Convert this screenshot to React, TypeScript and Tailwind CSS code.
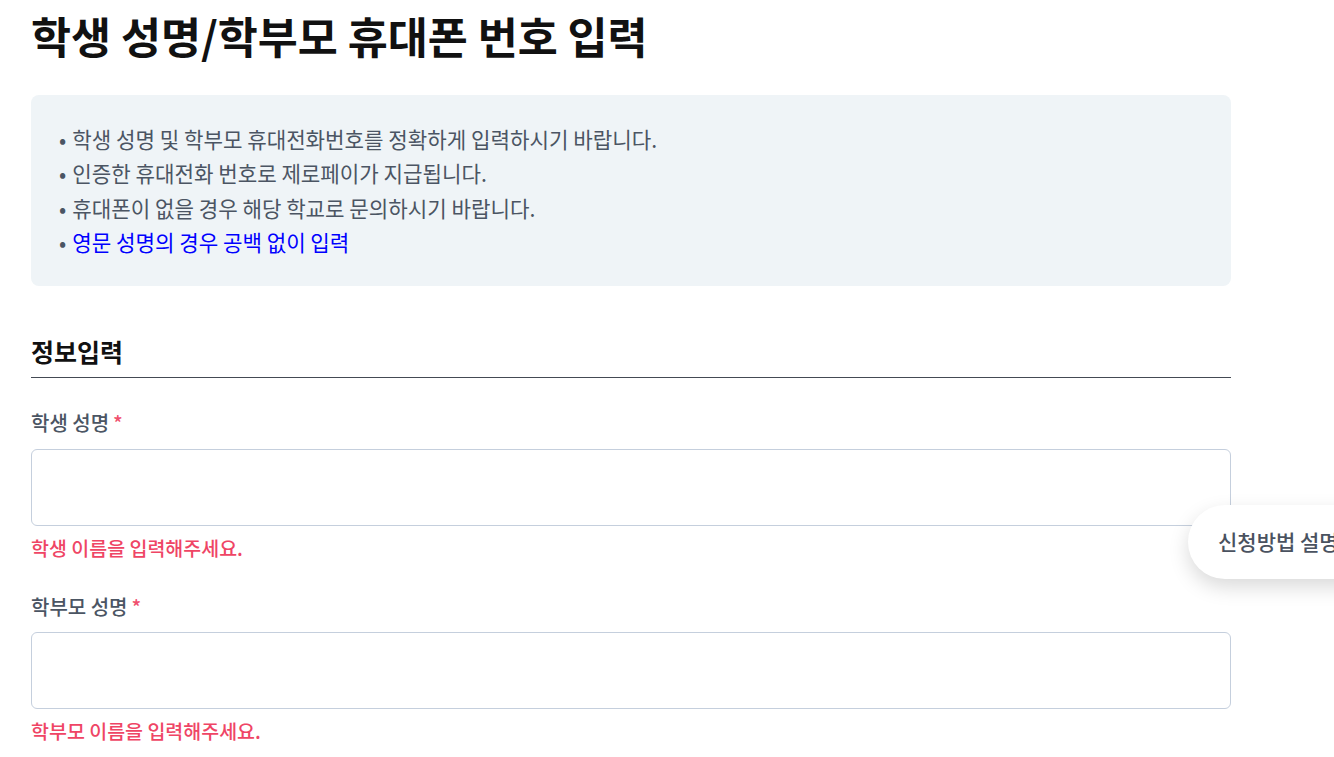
export default function App() {
  const font = 'font-["Noto_Sans_CJK_KR","Noto_Sans",sans-serif]'
  return (
    <div className={`relative min-h-[757px] w-[1334px] overflow-hidden bg-white ${font}`}>
      <div className="w-[1200px] ml-[31px]">
        <h1 className="text-[43.5px] font-semibold leading-none text-[#111] pt-[14px]">
          학생 성명/학부모 휴대폰 번호 입력
        </h1>

        <div className="mt-[37px] rounded-lg bg-[#eff4f7] px-[28px] pt-[27px] pb-[26px]">
          <ul className="text-[21.2px] leading-[34.5px] text-[#4b5563]">
            <li><span className="mr-[6px]">•</span>학생 성명 및 학부모 휴대전화번호를 정확하게 입력하시기 바랍니다.</li>
            <li><span className="mr-[6px]">•</span>인증한 휴대전화 번호로 제로페이가 지급됩니다.</li>
            <li><span className="mr-[6px]">•</span>휴대폰이 없을 경우 해당 학교로 문의하시기 바랍니다.</li>
            <li>
              <span className="mr-[6px]">•</span><span className="text-[#0000ff]">영문 성명의 경우 공백 없이 입력</span>
            </li>
          </ul>
        </div>

        <h2 className="mt-[48px] pb-[9px] border-b border-[#444a54] text-[25px] font-bold text-[#111] leading-[34px]">
          정보입력
        </h2>

        <div className="mt-[31px]">
          <label className="block text-[20px] font-medium text-[#4b5563] leading-[28px]">
            학생 성명<span className="text-[#f0506e] ml-[4px]">*</span>
          </label>
          <input className="mt-[12px] block w-full h-[77px] rounded-md border border-[#c5cfdd] px-4 text-[18px] outline-none" />
          <p className="mt-[8px] text-[19.5px] font-medium text-[#ef4565] leading-[28px]">학생 이름을 입력해주세요.</p>
        </div>

        <div className="mt-[31px]">
          <label className="block text-[20px] font-medium text-[#4b5563] leading-[28px]">
            학부모 성명<span className="text-[#f0506e] ml-[4px]">*</span>
          </label>
          <input className="mt-[11px] block w-full h-[77px] rounded-md border border-[#c5cfdd] px-4 text-[18px] outline-none" />
          <p className="mt-[8px] text-[19.5px] font-medium text-[#ef4565] leading-[28px]">학부모 이름을 입력해주세요.</p>
        </div>
      </div>

      <button className="absolute left-[1188px] top-[505px] h-[74px] w-[240px] rounded-full bg-white pl-[30px] text-left text-[21px] font-medium text-[#4a5260] shadow-[0_8px_20px_rgba(0,0,0,0.15)]">
        신청방법 설명
      </button>
    </div>
  )
}
